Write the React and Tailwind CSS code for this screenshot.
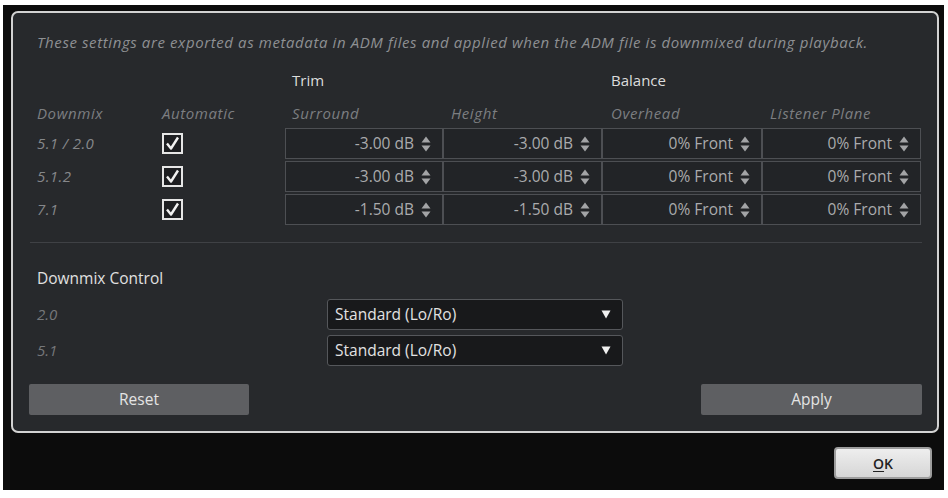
import React from 'react';

const rows = [
    { name: '5.1 / 2.0', surround: '-3.00 dB', height: '-3.00 dB', overhead: '0% Front', listener: '0% Front' },
    { name: '5.1.2', surround: '-3.00 dB', height: '-3.00 dB', overhead: '0% Front', listener: '0% Front' },
    { name: '7.1', surround: '-1.50 dB', height: '-1.50 dB', overhead: '0% Front', listener: '0% Front' },
];

const cols = 'grid grid-cols-[125px_123px_158px_159px_160px_159px]';

// small up/down arrows at the right end of a value field
const Spinner = () => (
    <svg width="10" height="16" viewBox="0 0 10 16" className="shrink-0">
        <path d="M5 0.5 L9.5 6.5 L0.5 6.5 Z" fill="#a3a4a6" />
        <path d="M0.5 9.5 L9.5 9.5 L5 15.5 Z" fill="#a3a4a6" />
    </svg>
);

const ValueField = ({ value }) => (
    <div className="h-[31px] border border-[#4d4f53] bg-[#222427] flex items-center justify-end gap-[7px] pr-[11px] text-[15.5px] text-[#aaabad]">
        <span>{value}</span>
        <Spinner />
    </div>
);

const CheckBox = () => (
    <div className="w-[21px] h-[21px] border-2 border-[#e6e6e6] bg-[#1d1e21] flex items-center justify-center">
        <svg width="15" height="15" viewBox="0 0 15 15">
            <path d="M2 7.5 L6 12.5 L13 1.5" stroke="#f2f2f2" strokeWidth="2.4" fill="none" strokeLinejoin="round" />
        </svg>
    </div>
);

const Select = ({ value }) => (
    <div className="w-[296px] h-[31px] rounded-[3px] border border-[#55575b] bg-[#18191b] flex items-center justify-between pl-[7px] pr-[11px] text-[15.5px] text-[#e2e2e2]">
        <span>{value}</span>
        <svg width="10" height="9" viewBox="0 0 10 9">
            <path d="M0.5 0.5 L9.5 0.5 L5 8.5 Z" fill="#f0f0f0" />
        </svg>
    </div>
);

export default function App() {
    return (
        <div className="w-[948px] h-[498px] bg-white pt-[5px] pl-[3px]" style={{ fontFamily: '"Open Sans", "Noto Sans", sans-serif' }}>
            <div className="w-[941px] h-[485px] bg-[#0c0c0c] pt-[6px] pl-[8px] flex flex-col">
                {/* main settings panel */}
                <div className="w-[928px] h-[422px] rounded-[7px] border-2 border-[#d2d2d2] bg-[#27292c] pt-[19px] pl-[24px] pr-[15px]">
                    <p className="h-[20px] leading-[20px] italic text-[15px] tracking-[0.6px] text-[#8e9093] whitespace-nowrap">
                        These settings are exported as metadata in ADM files and applied when the ADM file is downmixed during playback.
                    </p>

                    <div className={`${cols} mt-[18px] h-[20px] leading-[20px] text-[15px] text-[#dcdcdc]`}>
                        <span />
                        <span />
                        <span className="pl-[7px] col-span-2">Trim</span>
                        <span className="pl-[9px] col-span-2">Balance</span>
                    </div>

                    <div className={`${cols} mt-[13px] h-[20px] leading-[20px] italic text-[15px] tracking-[0.6px] text-[#7c7e81]`}>
                        <span>Downmix</span>
                        <span>Automatic</span>
                        <span className="pl-[7px]">Surround</span>
                        <span className="pl-[8px]">Height</span>
                        <span className="pl-[9px]">Overhead</span>
                        <span className="pl-[8px]">Listener Plane</span>
                    </div>

                    <div className="mt-[5px] flex flex-col gap-[2px]">
                        {rows.map((r) => (
                            <div key={r.name} className={`${cols} items-center`}>
                                <span className="italic text-[15px] tracking-[0.4px] text-[#85878a]">{r.name}</span>
                                <div>
                                    <CheckBox />
                                </div>
                                <ValueField value={r.surround} />
                                <ValueField value={r.height} />
                                <ValueField value={r.overhead} />
                                <ValueField value={r.listener} />
                            </div>
                        ))}
                    </div>

                    <div className="mt-[17px] -ml-[7px] h-px bg-[#3f4145]" />

                    <div className="mt-[25px] h-[20px] leading-[20px] text-[15.5px] text-[#e0e0e0]">Downmix Control</div>

                    <div className="mt-[11px] flex flex-col gap-[5px]">
                        <div className="flex items-center">
                            <span className="w-[290px] italic text-[15px] text-[#75777a]">2.0</span>
                            <Select value="Standard (Lo/Ro)" />
                        </div>
                        <div className="flex items-center">
                            <span className="w-[290px] italic text-[15px] text-[#75777a]">5.1</span>
                            <Select value="Standard (Lo/Ro)" />
                        </div>
                    </div>

                    <div className="mt-[18px] -ml-[8px] flex justify-between">
                        <button className="w-[220px] h-[31px] rounded-[2px] bg-[#5e5f62] text-[15.5px] text-[#e4e4e4]">Reset</button>
                        <button className="w-[221px] h-[31px] rounded-[2px] bg-[#5e5f62] text-[15.5px] text-[#e4e4e4]">Apply</button>
                    </div>
                </div>

                <div className="flex justify-end pr-[12px] mt-[14px]">
                    <button className="w-[98px] h-[32px] rounded-[4px] border-2 border-[#9d9d9d] bg-gradient-to-b from-[#eeeeee] to-[#d6d6d6] text-[14px] font-semibold text-[#222]">
                        <span className="underline underline-offset-2">O</span>K
                    </button>
                </div>
            </div>
        </div>
    );
}
